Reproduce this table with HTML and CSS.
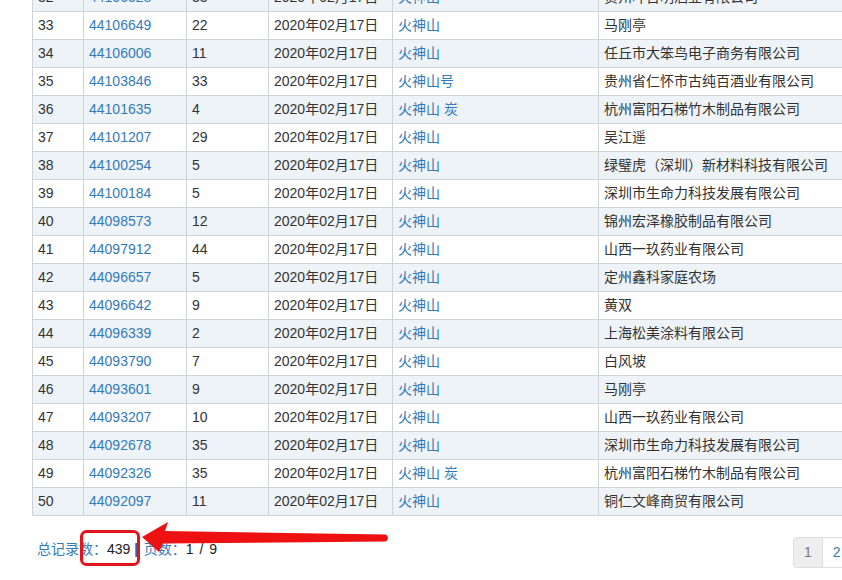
FILE: index.html
```html
<!DOCTYPE html>
<html lang="zh-CN">
<head>
<meta charset="utf-8">
<title>查询结果</title>
<link rel="stylesheet" href="styles.css">
</head>
<body>
<div class="page">
  <table class="results">
    <colgroup>
      <col class="c-no"><col class="c-reg"><col class="c-cls"><col class="c-date"><col class="c-name"><col class="c-owner">
    </colgroup>
    <tbody>
      <tr><td>32</td><td><a href="#">44106528</a></td><td>33</td><td>2020年02月17日</td><td><a href="#">火神山</a></td><td>贵州叶台明酒业有限公司</td></tr>
      <tr><td>33</td><td><a href="#">44106649</a></td><td>22</td><td>2020年02月17日</td><td><a href="#">火神山</a></td><td>马刚亭</td></tr>
      <tr><td>34</td><td><a href="#">44106006</a></td><td>11</td><td>2020年02月17日</td><td><a href="#">火神山</a></td><td>任丘市大笨鸟电子商务有限公司</td></tr>
      <tr><td>35</td><td><a href="#">44103846</a></td><td>33</td><td>2020年02月17日</td><td><a href="#">火神山号</a></td><td>贵州省仁怀市古纯百酒业有限公司</td></tr>
      <tr><td>36</td><td><a href="#">44101635</a></td><td>4</td><td>2020年02月17日</td><td><a href="#">火神山 炭</a></td><td>杭州富阳石梯竹木制品有限公司</td></tr>
      <tr><td>37</td><td><a href="#">44101207</a></td><td>29</td><td>2020年02月17日</td><td><a href="#">火神山</a></td><td>吴江遥</td></tr>
      <tr><td>38</td><td><a href="#">44100254</a></td><td>5</td><td>2020年02月17日</td><td><a href="#">火神山</a></td><td>绿璧虎（深圳）新材料科技有限公司</td></tr>
      <tr><td>39</td><td><a href="#">44100184</a></td><td>5</td><td>2020年02月17日</td><td><a href="#">火神山</a></td><td>深圳市生命力科技发展有限公司</td></tr>
      <tr><td>40</td><td><a href="#">44098573</a></td><td>12</td><td>2020年02月17日</td><td><a href="#">火神山</a></td><td>锦州宏泽橡胶制品有限公司</td></tr>
      <tr><td>41</td><td><a href="#">44097912</a></td><td>44</td><td>2020年02月17日</td><td><a href="#">火神山</a></td><td>山西一玖药业有限公司</td></tr>
      <tr><td>42</td><td><a href="#">44096657</a></td><td>5</td><td>2020年02月17日</td><td><a href="#">火神山</a></td><td>定州鑫科家庭农场</td></tr>
      <tr><td>43</td><td><a href="#">44096642</a></td><td>9</td><td>2020年02月17日</td><td><a href="#">火神山</a></td><td>黄双</td></tr>
      <tr><td>44</td><td><a href="#">44096339</a></td><td>2</td><td>2020年02月17日</td><td><a href="#">火神山</a></td><td>上海松美涂料有限公司</td></tr>
      <tr><td>45</td><td><a href="#">44093790</a></td><td>7</td><td>2020年02月17日</td><td><a href="#">火神山</a></td><td>白风坡</td></tr>
      <tr><td>46</td><td><a href="#">44093601</a></td><td>9</td><td>2020年02月17日</td><td><a href="#">火神山</a></td><td>马刚亭</td></tr>
      <tr><td>47</td><td><a href="#">44093207</a></td><td>10</td><td>2020年02月17日</td><td><a href="#">火神山</a></td><td>山西一玖药业有限公司</td></tr>
      <tr><td>48</td><td><a href="#">44092678</a></td><td>35</td><td>2020年02月17日</td><td><a href="#">火神山</a></td><td>深圳市生命力科技发展有限公司</td></tr>
      <tr><td>49</td><td><a href="#">44092326</a></td><td>35</td><td>2020年02月17日</td><td><a href="#">火神山 炭</a></td><td>杭州富阳石梯竹木制品有限公司</td></tr>
      <tr><td>50</td><td><a href="#">44092097</a></td><td>11</td><td>2020年02月17日</td><td><a href="#">火神山</a></td><td>铜仁文峰商贸有限公司</td></tr>
    </tbody>
  </table>

  <div class="footer">
    <div class="summary">
      <span class="label">总记录数：</span><span class="value">439</span>
      <span class="sep">|</span>
      <span class="label">页数：</span><span class="value pages">1 / 9</span>
    </div>
    <ul class="pagination">
      <li class="current"><span>1</span></li>
      <li><a href="#">2</a></li>
      <li><a href="#">3</a></li>
      <li><a href="#">4</a></li>
    </ul>
  </div>
</div>

<svg class="annotation" width="842" height="580" viewBox="0 0 842 580" aria-hidden="true">
  <rect x="81.5" y="531.5" width="57" height="33" rx="5" ry="5" fill="none" stroke="#e3141c" stroke-width="3"/>
  <path d="M142 537 L168 522 L165 531 L386 534.5 Q390 538 386 541.5 L163 543.5 L159 552 Z" fill="#ee1111"/>
</svg>
</body>
</html>
```

FILE: styles.css
```css
html, body {
  margin: 0;
  padding: 0;
}

body {
  width: 842px;
  height: 580px;
  overflow: hidden;
  position: relative;
  background: #ffffff;
  font-family: "Liberation Sans", "Noto Sans CJK SC", sans-serif;
  font-size: 14px;
  color: #333333;
}

a {
  color: #337ab7;
  text-decoration: none;
}

.page {
  width: 1000px;
  padding: 0 0 0 32px;
  margin-top: -17px;
}

.results {
  border-collapse: collapse;
  width: 1000px;
  table-layout: fixed;
}

.c-no { width: 51px; }
.c-reg { width: 103px; }
.c-cls { width: 82px; }
.c-date { width: 124px; }
.c-name { width: 206px; }
.c-owner { width: auto; }

.results td {
  border: 1px solid #cfd3d8;
  padding: 4px 5px;
  line-height: 19px;
  white-space: nowrap;
  overflow: hidden;
}

.results tr:nth-child(odd) td {
  background: #eef3f8;
}

.footer {
  display: flex;
  align-items: flex-start;
  margin-top: 21px;
}

.summary {
  width: 756px;
  padding: 2px 0 0 5px;
  line-height: 20px;
  font-size: 14px;
}

.summary .label {
  color: #337ab7;
}

.summary .value {
  color: #222222;
}

.summary .pages {
  word-spacing: 2px;
}

.summary .sep {
  color: #111111;
  margin: 0 2px 0 0;
}

.pagination {
  display: flex;
  list-style: none;
  margin: 0;
  padding: 0;
}

.pagination li > a,
.pagination li > span {
  display: block;
  padding: 4px 10px 5px;
  line-height: 20px;
  border: 1px solid #dddddd;
  margin-left: -1px;
  color: #337ab7;
  background: #ffffff;
}

.pagination li:first-child > span {
  margin-left: 0;
  border-radius: 4px 0 0 4px;
}

.pagination .current > span {
  background: #eeeeee;
  color: #777777;
}

.annotation {
  position: absolute;
  left: 0;
  top: 0;
  pointer-events: none;
}
```
